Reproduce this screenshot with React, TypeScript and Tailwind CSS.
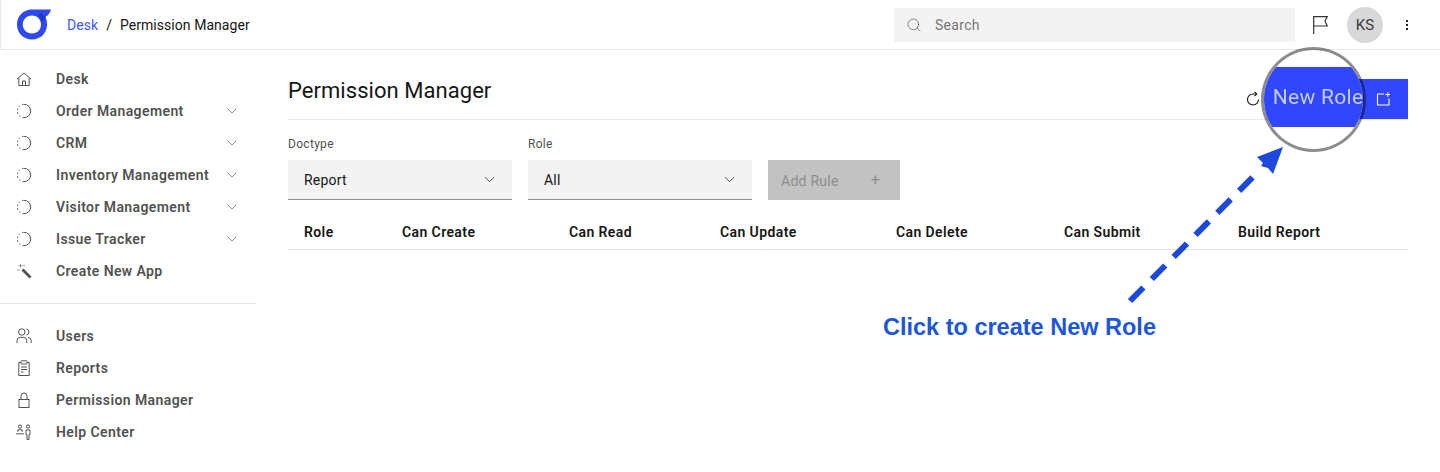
import { ChevronDown, Search } from "lucide-react";
import type { ReactNode } from "react";

const font = "font-['Roboto','Liberation_Sans',sans-serif]";

const Svg = ({ children, size = 16 }: { children: ReactNode; size?: number }) => (
  <svg width={size} height={size} viewBox="0 0 16 16" fill="none" stroke="currentColor" strokeWidth="1" className="shrink-0">
    {children}
  </svg>
);

const HomeIcon = () => (
  <Svg>
    <path d="M1 8.200 8 2l7 6.200M2.800 6.800V14.500h10.400V6.800M6.500 14.500v-4.500h3v4.500" />
  </Svg>
);

const DashedCircle = () => (
  <Svg>
    <path d="M8 1.300a6.700 6.700 0 0 1 0 13.400" />
    <path d="M8 14.700a6.700 6.700 0 0 1-6.700-6.700A6.700 6.700 0 0 1 8 1.300" strokeDasharray="1.600 2.200" />
  </Svg>
);

const WandIcon = () => (
  <Svg>
    <path d="M6.500 6.500 14.500 14.500" strokeWidth="2.800" />
    <path d="M4.500 1v3.500M2.500 2.800h4M1 7h2.500M8 1.500v2" strokeOpacity="0.6" />
  </Svg>
);

const UsersIcon = () => (
  <Svg>
    <circle cx="5.800" cy="4" r="3.200" />
    <path d="M1 15v-2.500a3.200 3.200 0 0 1 3.200-3.200h3.300a3.200 3.200 0 0 1 3.200 3.200V15" />
    <path d="M10.500 .9a3.200 3.200 0 0 1 0 6.200M12 9.500a3.200 3.200 0 0 1 3.200 3V15" />
  </Svg>
);

const ReportIcon = () => (
  <Svg>
    <path d="M4.800 2.500H2.800v13h10.400v-13h-2" />
    <rect x="5" y=".8" width="6" height="3.200" rx=".6" />
    <path d="M5 7h6M5 9.500h6M5 12h2.500" />
  </Svg>
);

const LockIcon = () => (
  <Svg>
    <rect x="3" y="7.500" width="10" height="8" />
    <path d="M5 7.500V4a3 3 0 0 1 6 0v3.500" />
  </Svg>
);

const HelpIcon = () => (
  <Svg>
    <circle cx="4" cy="2.600" r="1.600" />
    <path d="M1.800 7.800V5.800h4.400v2M.2 9.800h7.600" />
    <circle cx="12" cy="2.600" r="1.600" />
    <path d="M10 6h4v4.500h-1V15.500h-2v-5h-1z" />
  </Svg>
);

const topItems = [
  { label: "Desk", icon: <HomeIcon />, more: false },
  { label: "Order Management", icon: <DashedCircle />, more: true },
  { label: "CRM", icon: <DashedCircle />, more: true },
  { label: "Inventory Management", icon: <DashedCircle />, more: true },
  { label: "Visitor Management", icon: <DashedCircle />, more: true },
  { label: "Issue Tracker", icon: <DashedCircle />, more: true },
  { label: "Create New App", icon: <WandIcon />, more: false },
];

const bottomItems = [
  { label: "Users", icon: <UsersIcon /> },
  { label: "Reports", icon: <ReportIcon /> },
  { label: "Permission Manager", icon: <LockIcon /> },
  { label: "Help Center", icon: <HelpIcon /> },
];

const columns = ["Role", "Can Create", "Can Read", "Can Update", "Can Delete", "Can Submit", "Build Report"];

function SideItem({ label, icon, more }: { label: string; icon: ReactNode; more?: boolean }) {
  return (
    <div className="flex h-8 items-center pl-4 pr-4 text-[#525252]">
      <div className="w-10 flex items-center">{icon}</div>
      <span className="flex-1 pt-px text-[14px] font-semibold tracking-[0.4px] whitespace-nowrap">{label}</span>
      {more && <ChevronDown size={16} strokeWidth={1} className="text-[#525252] shrink-0" />}
    </div>
  );
}

function Select({ label, value }: { label: string; value: string }) {
  return (
    <div className="w-56">
      <div className="h-10 pt-4 text-[12px] leading-4 tracking-[0.3px] text-[#525252]">{label}</div>
      <div className="flex h-10 items-center justify-between border-b border-[#8d8d8d] bg-[#f3f3f3] pl-4 pr-[14px] text-[14px] tracking-[0.2px] text-[#161616]">
        <span className="pt-[2px]">{value}</span>
        <ChevronDown size={17} strokeWidth={1} />
      </div>
    </div>
  );
}

export default function App() {
  return (
    <div className={`${font} relative h-[472px] w-[1440px] overflow-hidden bg-white`}>
      <header className="flex h-[50px] items-center border-b border-l border-[#e8e8e8] pl-4 pr-8">
        <svg width="36" height="32" viewBox="0 0 36 32" className="shrink-0">
          <path
            fillRule="evenodd"
            fill="#2f49f2"
            d="M15 .500H34C33 4 31.500 6 28.500 8 29.500 10 30 13 30 15.500 30 24 23.500 30.500 15 30.500S0 24 0 15.500 6.500 .500 15 .500ZM15 6.500C9.500 6.500 5.800 10.500 5.800 15.500S9.500 24.500 15 24.500 24 20.500 24 15.500 20.500 6.500 15 6.500Z"
          />
          <path d="M21 5.500 24 4 28.500 8 25 13C24 10 23 7.500 21 5.500Z" fill="#2238b4" />
        </svg>
        <nav className="ml-[14px] flex items-center pt-px text-[14px] tracking-[0.05px]">
          <span className="text-[#3d5afe]">Desk</span>
          <span className="mx-2 text-[#161616]">/</span>
          <span className="text-[#161616]">Permission Manager</span>
        </nav>
        <div className="ml-auto flex h-[34px] w-[401px] items-center gap-[13px] bg-[#f3f3f3] px-3 text-[14px] tracking-[0.3px] text-[#777]">
          <Search size={16} strokeWidth={1} className="text-[#525252]" />
          <span className="pt-[2px]">Search</span>
        </div>
        <svg width="15" height="18" viewBox="0 0 15 18" className="ml-[18px] shrink-0 text-[#333]" fill="none" stroke="currentColor" strokeWidth="1.200">
          <path d="M.700 18V.700h13.500l-2.200 4.300 2.200 5H.700" />
        </svg>
        <div className="ml-[19px] flex size-9 items-center justify-center rounded-full bg-[#d8d8d8] pt-px text-[15px] text-[#3b3b3b]">KS</div>
        <div className="ml-[23px] flex flex-col gap-[2px]">
          <i className="size-[2px] bg-[#222]" />
          <i className="size-[2px] bg-[#222]" />
          <i className="size-[2px] bg-[#222]" />
        </div>
      </header>

      <div className="flex">
        <aside className="w-64 shrink-0 pt-[13px]">
          {topItems.map((item) => (
            <SideItem key={item.label} {...item} />
          ))}
          <div className="mt-4 mb-4 h-px bg-[#e5e5e5]" />
          {bottomItems.map((item) => (
            <SideItem key={item.label} {...item} />
          ))}
        </aside>

        <main className="ml-8 w-[1120px] pt-[29px]">
          <div className="flex h-10 items-center justify-between border-b border-[#e8e8e8] box-content">
            <h1 className="pb-4 text-[22px] leading-7 tracking-[0.05px] text-[#161616]">Permission Manager</h1>
            <div className="flex items-center">
              <svg width="16" height="16" viewBox="0 0 16 16" fill="none" stroke="#161616" strokeWidth="1.100" className="mr-[17px]">
                <path d="M13.500 8.500A5.500 5.500 0 1 1 8 3h3" />
                <path d="M9.500 .800 11.800 3 9.500 5.200" />
              </svg>
              <div className="flex h-10 w-[130px] items-center justify-end bg-[#3047ff] pr-[17px] text-white">
                <svg width="16" height="16" viewBox="0 0 16 16" fill="none" stroke="currentColor" strokeWidth="1.100">
                  <path d="M9 3H2.500v11H14V7.500M10.500 3.500h4.500M12.800 1.200v4.500" />
                </svg>
              </div>
            </div>
          </div>

          <div className="flex gap-4">
            <Select label="Doctype" value="Report" />
            <Select label="Role" value="All" />
            <div className="mt-10 flex h-10 w-[132px] items-center justify-between bg-[#c2c2c2] pl-[13px] pr-[20px] text-[14px] tracking-[0.25px] text-[#8d8d8d]">
              <span className="pt-[2px]">Add Rule</span>
              <span className="text-[16px]">+</span>
            </div>
          </div>

          <div className="mt-4 grid h-[33px] grid-cols-[98px_167px_151px_176px_168px_174px_1fr] items-center border-b border-[#e0e0e0] pl-4 text-[14px] font-semibold tracking-[0.4px] text-[#161616] box-content">
            {columns.map((c) => (
              <span key={c} className="whitespace-nowrap">{c}</span>
            ))}
          </div>
        </main>
      </div>

      {/* magnifier over the button */}
      <div className="absolute left-[1261px] top-[47px] h-[105px] w-[105px] overflow-hidden rounded-full border-[3px] border-black/45 bg-white bg-clip-padding">
        <div className="mt-[17px] flex h-[60px] items-center justify-center bg-[#3047ff] pl-[9px] pt-[2px] text-[21px] tracking-[0.3px] whitespace-nowrap text-[#c3cbff] blur-[0.4px]">
          New Role
        </div>
      </div>

      {/* annotation */}
      <svg width="1440" height="472" className="pointer-events-none absolute left-0 top-0">
        <path d="M1130 301 1253 177" stroke="#1c48dc" strokeWidth="6" strokeDasharray="19 12" fill="none" />
        <path d="M1283 147 1257 157 1263 163 1261 166 1268 168 1273 174Z" fill="#1c48dc" />
      </svg>
      <div className="absolute left-[883px] top-[314px] font-['Liberation_Sans',sans-serif] text-[23.500px] font-bold leading-[26px] text-[#1c56dc]">
        Click to create New Role
      </div>
    </div>
  );
}
